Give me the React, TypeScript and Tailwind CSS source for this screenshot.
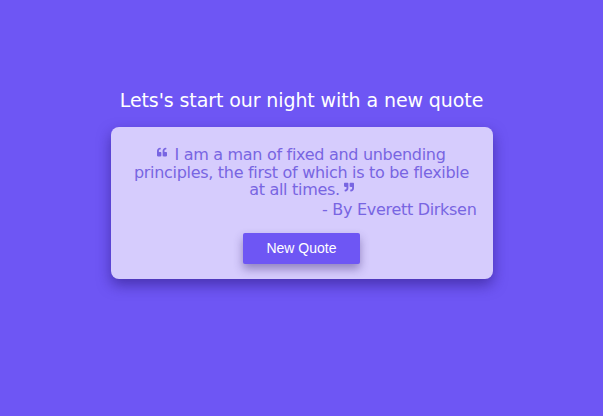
import { FaQuoteLeft, FaQuoteRight } from "react-icons/fa";

export default function App() {
  return (
    <div
      className="w-[603px] h-[416px] bg-[#6e56f4] flex flex-col items-center pt-[88px]"
      style={{ fontFamily: '"DejaVu Sans", "Open Sans", sans-serif' }}
    >
      <h1 className="text-white text-[19px] leading-[24px] tracking-[-0.1px]">
        Lets's start our night with a new quote
      </h1>

      <div className="mt-[15px] w-[382px] h-[152px] rounded-[8px] bg-[#d6ccfd] shadow-[0_6px_14px_rgba(40,20,120,0.55)] px-[12px] pt-[19px] flex flex-col">
        <p className="text-[#7865e2] text-[16px] leading-[17.5px] text-center tracking-[-0.3px] px-[10px]">
          <FaQuoteLeft className="inline-block align-top mt-[1px] mr-[7px]" size={10} />
          I am a man of fixed and unbending principles, the first of which is to be flexible at all times.
          <FaQuoteRight className="inline-block align-top mt-[1px] ml-[4px]" size={10} />
        </p>
        <p className="text-[#7865e2] text-[16px] leading-[18px] text-right mt-[2px] mr-[4px] tracking-[-0.3px]">
          - By Everett Dirksen
        </p>
        <div className="flex justify-center mt-[14px]">
          <button
            className="w-[117px] h-[31px] bg-[#6e56f4] text-white text-[14px] rounded-[2px] shadow-[0_5px_10px_rgba(60,40,120,0.45)]"
            style={{ fontFamily: '"Liberation Sans", Arial, sans-serif' }}
          >
            New Quote
          </button>
        </div>
      </div>
    </div>
  );
}
